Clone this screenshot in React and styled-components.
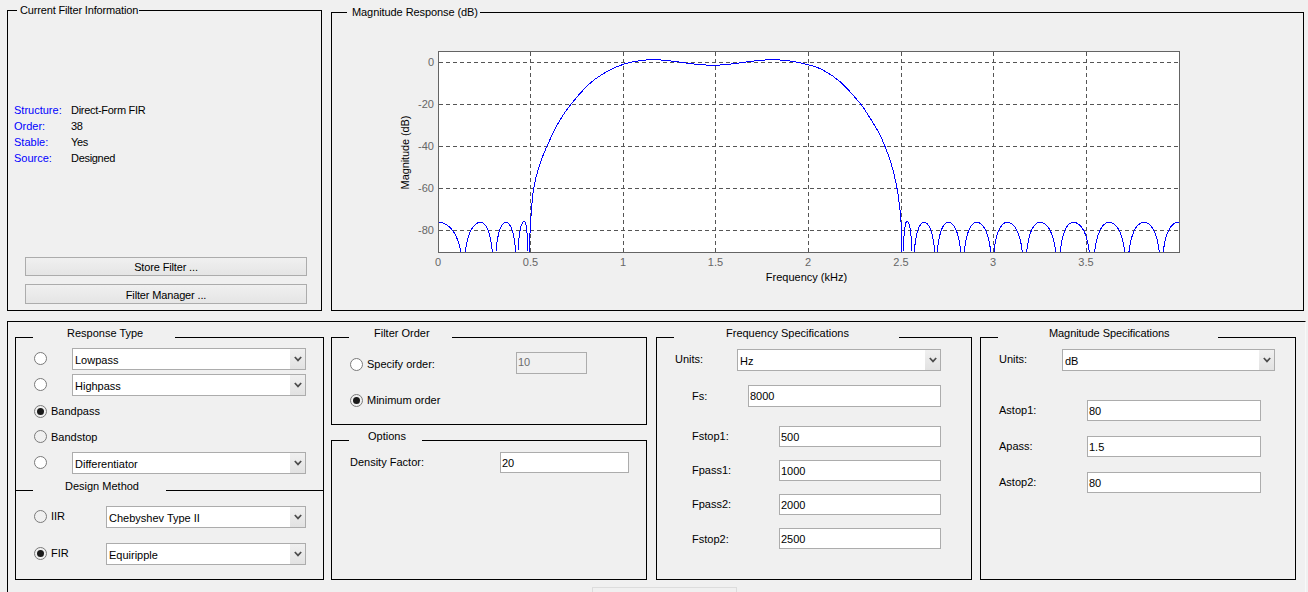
import React from "react";
import styled, { createGlobalStyle } from "styled-components";

const Global = createGlobalStyle`
  html, body { margin: 0; padding: 0; background: #f0f0f0; }
  body { font: 11px "Liberation Sans", Arial, sans-serif; color: #000; }
  #root { width: 1308px; height: 592px; overflow: hidden; }
`;

const Page = styled.div`
  width: 1308px;
  height: 592px;
  overflow: hidden;
  background: #f0f0f0;
  padding: 10px 0 0 7px;
  box-sizing: border-box;
`;
const TopRow = styled.div`
  display: flex;
  align-items: flex-end;
  gap: 9px;
  height: 301px;
`;
const Group = styled.section`
  position: relative;
  flex: none;
  box-sizing: border-box;
  border: 1px solid #000;
  width: ${(p) => p.$w}px;
  height: ${(p) => p.$h}px;
  margin-left: ${(p) => p.$ml || 0}px;
`;
const Legend = styled.span`
  position: absolute;
  top: ${(p) => p.$top ?? -11}px;
  left: ${(p) => p.$left ?? 17}px;
  width: ${(p) => p.$width}px;
  height: 14px;
  line-height: 13px;
  padding-left: ${(p) => p.$pl}px;
  box-sizing: border-box;
  background: #f0f0f0;
  white-space: nowrap;
  letter-spacing: ${(p) => p.$ls || 0}px;
`;
const InfoList = styled.dl`
  margin: 91px 0 0 6px;
  display: grid;
  grid-template-columns: 57px 1fr;
  grid-auto-rows: 16px;
  line-height: 16px;
`;
const InfoKey = styled.dt`
  color: #0000ff;
`;
const InfoVal = styled.dd`
  margin: 0;
  letter-spacing: -0.3px;
`;
const ButtonStack = styled.div`
  margin: 91px 0 0 17px;
  display: flex;
  flex-direction: column;
  gap: 8px;
`;
const PushButton = styled.button`
  width: 282px;
  height: ${(p) => p.$h}px;
  padding: ${(p) => (p.$h > 19 ? "1px" : "0")} 0 0;
  border: 1px solid #acacac;
  background: linear-gradient(#f0f0f0, #e5e5e5);
  font: inherit;
  letter-spacing: -0.15px;
  color: #000;
`;
const Plot = styled.svg`
  display: block;
`;
const BottomFrame = styled.div`
  margin-top: 10px;
  width: 1299px;
  height: 300px;
  border-top: 1px solid #000;
  border-left: 1px solid #000;
  border-right: 1px solid #f8f8f8;
  padding: 15px 0 0 7px;
  box-sizing: border-box;
  display: flex;
  position: relative;
`;
const Col = styled.div`
  display: flex;
  flex-direction: column;
  gap: 15px;
  margin-left: 7px;
`;
const Row = styled.div`
  display: flex;
  align-items: flex-start;
  height: ${(p) => p.$h}px;
  margin-top: ${(p) => p.$mt || 0}px;
  margin-left: ${(p) => p.$ml || 0}px;
`;
const Radio = styled.span`
  box-sizing: border-box;
  flex: none;
  width: 13px;
  height: 13px;
  margin-top: ${(p) => p.$mt || 0}px;
  border-radius: 50%;
  border: 1px solid #7a7a7a;
  background: ${(p) => (p.$white ? "#fff" : "#f0f0f0")};
  display: flex;
  align-items: center;
  justify-content: center;
  &::after {
    content: "";
    display: ${(p) => (p.$on ? "block" : "none")};
    width: 7px;
    height: 7px;
    border-radius: 50%;
    background: #1a1a1a;
  }
`;
const Label = styled.span`
  flex: none;
  width: ${(p) => (p.$w ? `${p.$w}px` : "auto")};
  margin-left: ${(p) => p.$ml || 0}px;
  margin-top: ${(p) => p.$mt || 0}px;
  line-height: 13px;
  white-space: nowrap;
`;
const SelectBox = styled.div`
  box-sizing: border-box;
  flex: none;
  width: ${(p) => p.$w}px;
  height: 22px;
  margin-left: ${(p) => p.$ml || 0}px;
  border: 1px solid #acacac;
  background: #fff;
  display: flex;
  align-items: center;
  padding-left: 2px;
`;
const SelectText = styled.span`
  flex: 1;
  padding-top: 2px;
`;
const Arrow = styled.span`
  width: 15px;
  height: 20px;
  background: linear-gradient(#f0f0f0, #e2e2e2);
  display: flex;
  align-items: center;
  justify-content: center;
`;
const Field = styled.div`
  box-sizing: border-box;
  flex: none;
  width: ${(p) => p.$w}px;
  height: ${(p) => p.$h || 21}px;
  margin-left: ${(p) => p.$ml || 0}px;
  border: 1px solid #acacac;
  background: ${(p) => (p.$off ? "#f0f0f0" : "#fff")};
  color: ${(p) => (p.$off ? "#6d6d6d" : "#000")};
  line-height: ${(p) => (p.$off ? 19 : 20)}px;
  padding-left: 1px;
`;
const GroupDivider = styled.div`
  position: absolute;
  left: 0;
  right: 0;
  top: 152px;
  border-top: 1px solid #000;
`;
const Stub = styled.div`
  position: absolute;
  left: 584px;
  top: 265px;
  width: 145px;
  height: 10px;
  box-sizing: border-box;
  border: 1px solid #dcdcdc;
  background: #f0f0f0;
`;

const Chevron = () => (
  <svg width="8" height="6" viewBox="0 0 8 6">
    <path d="M0.8 1 L4 4.4 L7.2 1" fill="none" stroke="#4d4d4d" strokeWidth="1.7" />
  </svg>
);

const Select = ({ children, w, ml }) => (
  <SelectBox $w={w} $ml={ml}>
    <SelectText>{children}</SelectText>
    <Arrow>
      <Chevron />
    </Arrow>
  </SelectBox>
);

const mainPts = [
  [529.8, 252], [530, 233.3], [531.7, 206.7], [534, 186.7], [539, 166.7], [546.7, 146.7], [560, 120], [571.7, 103.3],
  [590, 83.3], [606.7, 71.7], [623.3, 64.3], [640, 60.7], [655, 59.7], [673.3, 61.3], [696.7, 64.3],
  [715, 65.3], [733.3, 63.7], [756.7, 60.7], [773.3, 59.7], [790, 61], [808.3, 64.7], [823, 70],
  [840, 81.7], [860, 103.3], [870, 118], [880, 135], [888.3, 155], [893, 170], [897.3, 190], [900, 210],
  [901.3, 226.7], [901.7, 252],
];
const lobes = [
  [null, 438, 460.7, 222.3],
  [465.3, 480.7, 492.3, 222.3],
  [496, 506, 515.7, 222.3],
  [518, 524.3, 528, 221.3],
  [903.3, 907, 912, 221.3],
  [914.3, 924, 934.7, 222.3],
  [937.3, 948.3, 960.7, 222.3],
  [964.3, 976.7, 990.7, 222.3],
  [994, 1007.3, 1022.3, 222.3],
  [1026.7, 1040, 1055.7, 222.3],
  [1060.3, 1073.3, 1089.3, 222.3],
  [1094.7, 1109.3, 1124.7, 222.3],
  [1129, 1144, 1159.3, 222.3],
  [1163.3, 1178, 1193, 222.3],
];
const lobePath = ([x0, pk, x1, py]) => {
  const start = x0 ?? pk;
  const end = Math.min(x1, 1179);
  const pts = [];
  for (let x = start; x <= end + 0.001; x += (end - start) / 40) {
    const u = x < pk ? (pk - x) / (pk - start || 1) : (x - pk) / (x1 - pk);
    const c = Math.cos(1.369 * Math.min(u, 1));
    pts.push(`${x.toFixed(2)} ${(py - 42 * Math.log10(Math.max(c, 0.2))).toFixed(2)}`);
  }
  return "M" + pts.join("L");
};
const smooth = (pts) => {
  let d = `M${pts[0][0]} ${pts[0][1]}`;
  for (let i = 0; i < pts.length - 1; i++) {
    const a = pts[Math.max(i - 1, 0)], b = pts[i], c = pts[i + 1], e = pts[Math.min(i + 2, pts.length - 1)];
    d += `C${b[0] + (c[0] - a[0]) / 6} ${b[1] + (c[1] - a[1]) / 6} ${c[0] - (e[0] - b[0]) / 6} ${c[1] - (e[1] - b[1]) / 6} ${c[0]} ${c[1]}`;
  }
  return d;
};
const xTicks = [["0", 438], ["0.5", 530.5], ["1", 623], ["1.5", 715.5], ["2", 808], ["2.5", 901], ["3", 993], ["3.5", 1086]];
const yTicks = [["0", 62], ["-20", 104], ["-40", 146], ["-60", 188], ["-80", 230]];

/* svg user space = page coordinates, so the plot can be read directly against the screenshot */
const Chart = () => (
  <Plot width="971" height="296" viewBox="332 13 971 296" fontFamily="'Liberation Sans', Arial, sans-serif" fontSize="11">
    <rect x="438.5" y="51.5" width="741" height="201" fill="#fff" />
    <g stroke="#555" strokeDasharray="4 3" shapeRendering="crispEdges">
      {xTicks.slice(1).map(([t, x]) => <line key={t} x1={Math.floor(x) + 0.5} x2={Math.floor(x) + 0.5} y1="252" y2="52" />)}
      {yTicks.map(([t, y]) => <line key={t} x1="439" x2="1179" y1={y + 0.5} y2={y + 0.5} />)}
    </g>
    <g fill="none" stroke="#0000ff" shapeRendering="crispEdges">
      <path d={smooth(mainPts)} />
      {lobes.map((l, i) => <path key={i} d={lobePath(l)} />)}
    </g>
    <rect x="438.5" y="51.5" width="741" height="201" fill="none" stroke="#646464" shapeRendering="crispEdges" />
    <g fill="#666" textAnchor="middle">
      {xTicks.map(([t, x]) => <text key={t} x={x} y="266">{t}</text>)}
    </g>
    <g fill="#666" textAnchor="end">
      {yTicks.map(([t, y]) => <text key={t} x="434" y={y + 4}>{t}</text>)}
    </g>
    <text x="806.5" y="281" textAnchor="middle">Frequency (kHz)</text>
    <text transform="translate(408.5 152.5) rotate(-90)" textAnchor="middle" letterSpacing="-0.1">Magnitude (dB)</text>
  </Plot>
);

export default function App() {
  return (
    <Page>
      <Global />
      <TopRow>
        <Group $w={315} $h={301}>
          <Legend $top={-7} $left={9} $width={122} $pl={3} $ls={-0.16}>Current Filter Information</Legend>
          <InfoList>
            <InfoKey>Structure:</InfoKey><InfoVal>Direct-Form FIR</InfoVal>
            <InfoKey>Order:</InfoKey><InfoVal>38</InfoVal>
            <InfoKey>Stable:</InfoKey><InfoVal>Yes</InfoVal>
            <InfoKey>Source:</InfoKey><InfoVal>Designed</InfoVal>
          </InfoList>
          <ButtonStack>
            <PushButton $h={19}>Store Filter ...</PushButton>
            <PushButton $h={20}>Filter Manager ...</PushButton>
          </ButtonStack>
        </Group>
        <Group $w={973} $h={299}>
          <Legend $top={-7} $left={15} $width={133} $pl={5} $ls={-0.08}>Magnitude Response (dB)</Legend>
          <Chart />
        </Group>
      </TopRow>
      <BottomFrame>
        <Group $w={309} $h={243}>
          <Legend $width={142} $pl={34}>Response Type</Legend>
          <Row $h={26} $ml={18} $mt={10}>
            <Radio $white $mt={4} /><Select w={234} ml={25}>Lowpass</Select>
          </Row>
          <Row $h={26} $ml={18}>
            <Radio $white $mt={4} /><Select w={234} ml={25}>Highpass</Select>
          </Row>
          <Row $h={26} $ml={18}>
            <Radio $mt={5} $on /><Label $ml={4} $mt={5}>Bandpass</Label>
          </Row>
          <Row $h={26} $ml={18}>
            <Radio $mt={4} /><Label $ml={4} $mt={5}>Bandstop</Label>
          </Row>
          <Row $h={26} $ml={18}>
            <Radio $white $mt={4} /><Select w={234} ml={25}>Differentiator</Select>
          </Row>
          <GroupDivider />
          <Legend $top={142} $width={133} $pl={32}>Design Method</Legend>
          <Row $h={37} $ml={18} $mt={28}>
            <Radio $mt={4} /><Label $ml={4} $mt={4} $w={55}>IIR</Label><Select w={200}>Chebyshev Type II</Select>
          </Row>
          <Row $h={37} $ml={18}>
            <Radio $mt={4} $on /><Label $ml={4} $mt={4} $w={55}>FIR</Label><Select w={200}>Equiripple</Select>
          </Row>
        </Group>
        <Col>
          <Group $w={316} $h={88}>
            <Legend $width={103} $pl={25}>Filter Order</Legend>
            <Row $h={36} $ml={18} $mt={14}>
              <Radio $white $mt={6} /><Label $ml={4} $mt={6} $w={149}>Specify order:</Label><Field $off $w={71} $h={22}>10</Field>
            </Row>
            <Row $h={36} $ml={18}>
              <Radio $mt={6} $on /><Label $ml={4} $mt={6}>Minimum order</Label>
            </Row>
          </Group>
          <Group $w={316} $h={140}>
            <Legend $width={73} $pl={19}>Options</Legend>
            <Row $h={21} $ml={18} $mt={11}>
              <Label $w={150} $mt={4}>Density Factor:</Label><Field $w={129}>20</Field>
            </Row>
          </Group>
        </Col>
        <Group $w={316} $h={243} $ml={9}>
          <Legend $width={225} $pl={52}>Frequency Specifications</Legend>
          <Row $h={36} $ml={18} $mt={11}>
            <Label $w={62} $mt={4}>Units:</Label><Select w={204}>Hz</Select>
          </Row>
          <Row $h={41} $ml={35}>
            <Label $w={56} $mt={5}>Fs:</Label><Field $w={193} $h={22}>8000</Field>
          </Row>
          <Row $h={34} $ml={35}>
            <Label $w={87} $mt={4}>Fstop1:</Label><Field $w={162}>500</Field>
          </Row>
          <Row $h={34} $ml={35}>
            <Label $w={87} $mt={4}>Fpass1:</Label><Field $w={162}>1000</Field>
          </Row>
          <Row $h={34} $ml={35}>
            <Label $w={87} $mt={4}>Fpass2:</Label><Field $w={162}>2000</Field>
          </Row>
          <Row $h={34} $ml={35}>
            <Label $w={87} $mt={5}>Fstop2:</Label><Field $w={162}>2500</Field>
          </Row>
        </Group>
        <Group $w={316} $h={243} $ml={8}>
          <Legend $width={220} $pl={51} $ls={-0.08}>Magnitude Specifications</Legend>
          <Row $h={51} $ml={18} $mt={11}>
            <Label $w={63} $mt={4}>Units:</Label><Select w={213}>dB</Select>
          </Row>
          <Row $h={36} $ml={18}>
            <Label $w={88} $mt={4}>Astop1:</Label><Field $w={174}>80</Field>
          </Row>
          <Row $h={36} $ml={18}>
            <Label $w={88} $mt={4}>Apass:</Label><Field $w={174}>1.5</Field>
          </Row>
          <Row $h={36} $ml={18}>
            <Label $w={88} $mt={4}>Astop2:</Label><Field $w={174}>80</Field>
          </Row>
        </Group>
        <Stub />
      </BottomFrame>
    </Page>
  );
}
